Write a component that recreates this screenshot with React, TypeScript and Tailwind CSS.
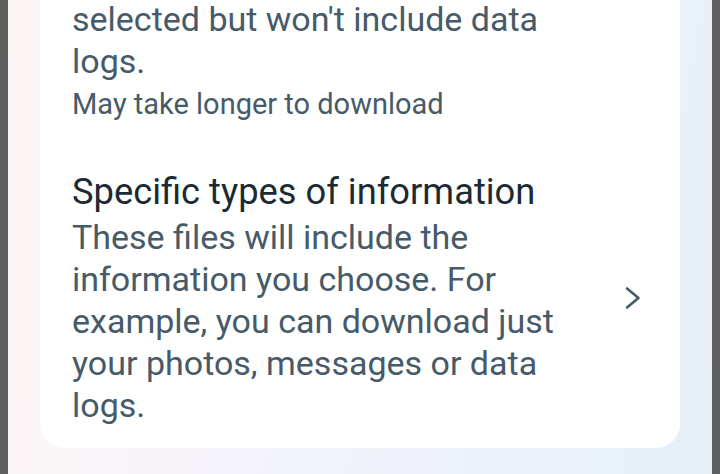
import React from "react";

export default function App() {
  return (
    <div
      className="flex h-[474px] w-[720px] overflow-hidden"
      style={{ fontFamily: "Roboto, 'Noto Sans', sans-serif" }}
    >
      <div className="w-2 shrink-0 bg-[#5f5f5f]" />
      <div className="flex flex-1 flex-col justify-end bg-[linear-gradient(100deg,#fdf5f4_0%,#f6f4fa_35%,#eaf0fa_75%,#e6f0f8_100%)] pb-[26px] pl-[32px] pr-[32px]">
        <div className="flex flex-col justify-end rounded-b-[24px] bg-white pb-[22px] pl-[32px] pr-[39px]">
          <div className="w-[500px]">
            <p className="text-[34px] leading-[42px] text-[#465a69]">
              selected but won't include data logs.
            </p>
            <p className="mt-[3px] text-[29px] leading-[38px] text-[#465a69]">
              May take longer to download
            </p>
          </div>
          <div className="mt-[46px] flex items-center">
            <div className="w-[500px]">
              <p className="text-[36.3px] leading-[46px] text-[#1c2b33]">
                Specific types of information
              </p>
              <p className="mt-[1px] text-[34px] leading-[42px] text-[#465a69]">
                These files will include the information you choose. For
                example, you can download just your photos, messages or data
                logs.
              </p>
            </div>
            <div className="flex flex-1 justify-end">
              <svg width="16" height="24" viewBox="0 0 16 24" fill="none">
                <path
                  d="M2 2.5 L13.5 12 L2 21.5"
                  stroke="#465a69"
                  strokeWidth="2.6"
                  strokeLinecap="round"
                  strokeLinejoin="round"
                />
              </svg>
            </div>
          </div>
        </div>
      </div>
      <div className="w-2 shrink-0 bg-[#5f5f5f]" />
    </div>
  );
}
